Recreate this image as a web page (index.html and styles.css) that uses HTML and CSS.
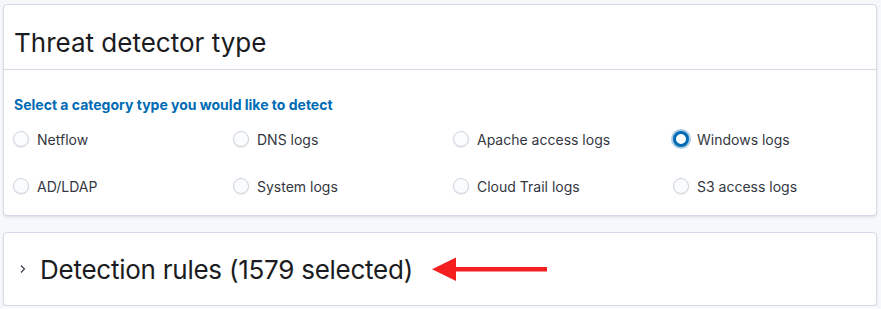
FILE: index.html
```html
<!DOCTYPE html>
<html>
<head>
<meta charset="utf-8">
<link rel="stylesheet" href="styles.css">
</head>
<body>
<div class="page">
  <section class="panel">
    <div class="panel-head"><h2 class="panel-title">Threat detector type</h2></div>
    <div class="panel-body">
      <div class="legend">Select a category type you would like to detect</div>
      <div class="grid">
        <label class="opt"><span class="radio"></span>Netflow</label>
        <label class="opt"><span class="radio"></span>DNS logs</label>
        <label class="opt"><span class="radio"></span>Apache access logs</label>
        <label class="opt"><span class="radio on"></span>Windows logs</label>
        <label class="opt"><span class="radio"></span>AD/LDAP</label>
        <label class="opt"><span class="radio"></span>System logs</label>
        <label class="opt"><span class="radio"></span>Cloud Trail logs</label>
        <label class="opt"><span class="radio"></span>S3 access logs</label>
      </div>
    </div>
  </section>
  <section class="panel accordion">
    <svg class="chev" width="8" height="12" viewBox="0 0 8 12"><path d="M2 2.5 L5.5 6 L2 9.5" fill="none" stroke="#343741" stroke-width="1.1"/></svg>
    <span class="acc-title">Detection rules (1579 selected)</span>
    <svg class="arrow" width="117" height="26" viewBox="0 0 117 26"><path d="M24 11 H116 V15.5 H24 Z" fill="#f42020"/><path d="M1 13.3 L25 1.5 L25 25 Z" fill="#f42020"/></svg>
  </section>
</div>
</body>
</html>
```
FILE: styles.css
```css
html, body { margin: 0; padding: 0; }
body { background: #f7f8fc; font-family: Inter, "Liberation Sans", sans-serif; color: #1a1c21; }
.page { padding: 4px 4px 0 3px; display: flex; flex-direction: column; gap: 16px; }
.panel { background: #fff; border: 1px solid #d3dae6; border-radius: 4px; box-shadow: 0 1px 2px rgba(0,0,0,0.06), 0 2px 3px rgba(152,162,179,0.12); }
.panel-head { height: 65px; box-sizing: border-box; display: flex; align-items: center; padding: 11px 10px 0; border-bottom: 1px solid #d3dae6; }
.panel-title { margin: 0; font-size: 26px; font-weight: 400; color: #1a1c21; }
.panel-body { padding: 27px 10px 21px; }
.legend { color: #006bb4; font-weight: 700; font-size: 14px; line-height: 16px; }
.grid { display: grid; grid-template-columns: repeat(4, 220px); row-gap: 31px; margin-top: 18px; }
.opt { display: flex; align-items: center; gap: 8px; font-size: 14px; color: #343741; height: 16px; }
.radio { width: 14px; height: 14px; border: 1px solid #cdd3dc; border-radius: 50%; background: #fbfcfd; box-shadow: 0 1px 1px rgba(0,0,0,0.07); flex: none; box-sizing: content-box; margin-left: -1px; }
.radio.on { width: 10px; height: 10px; border: 3px solid #006bb4; background: #fff; box-shadow: 0 0 0 2px rgba(0,107,180,0.35); }
.accordion { height: 72px; display: flex; align-items: center; padding: 0 0 0 15px; }
.chev { margin-right: 13px; }
.acc-title { font-size: 26px; font-weight: 400; color: #1a1c21; letter-spacing: -0.25px; }
.arrow { margin-left: 18px; }
```
